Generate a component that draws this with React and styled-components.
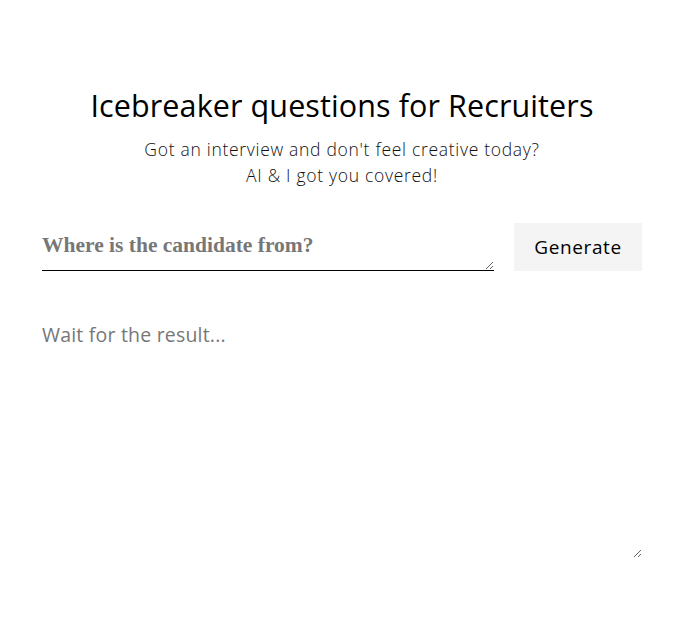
import React from "react";
import styled, { createGlobalStyle } from "styled-components";

const GlobalStyle = createGlobalStyle`
	body {
		margin: 0;
		background: #fff;
		font-family: "Open Sans", "Liberation Sans", sans-serif;
		color: #111;
	}
`;

export default function App() {
	return (
		<>
			<GlobalStyle />
			<Page>
				<Title>Icebreaker questions for Recruiters</Title>
				<Subtitle>
					Got an interview and don't feel creative today?
					<br />
					AI &amp; I got you covered!
				</Subtitle>
				<Form>
					<Location placeholder="Where is the candidate from?" />
					<Button>Generate</Button>
				</Form>
				<Result placeholder="Wait for the result..." autoFocus />
			</Page>
		</>
	);
}

const Page = styled.div`
	width: 600px;
	margin: 0 auto;
	padding-top: 85px;
	display: flex;
	flex-direction: column;
	align-items: center;
`;
const Title = styled.h1`
	margin: 0;
	font-size: 30.5px;
	font-weight: 400;
	line-height: 40px;
	letter-spacing: 0.1px;
	color: #000;
`;
const Subtitle = styled.p`
	margin: 11px 0 0;
	font-size: 17.5px;
	font-weight: 300;
	line-height: 26px;
	letter-spacing: 0.7px;
	text-align: center;
	color: #111;
`;
const Form = styled.div`
	width: 100%;
	margin-top: 35px;
	display: flex;
	align-items: stretch;
	gap: 20px;
`;
const Location = styled.textarea`
	flex: 1;
	height: 48px;
	box-sizing: border-box;
	border: none;
	border-bottom: 1.5px solid #000;
	padding: 10px 0 0;
	font-family: "Liberation Serif", serif;
	font-weight: 700;
	font-size: 21.5px;
	outline: none;
	&::placeholder {
		color: #777;
	}
`;
const Button = styled.button`
	width: 128px;
	height: 48px;
	border: none;
	background: #f4f4f4;
	font-family: "Open Sans", "Liberation Sans", sans-serif;
	font-size: 19px;
	letter-spacing: 0.6px;
	color: #000;
`;
const Result = styled.textarea`
	width: 100%;
	height: 238px;
	margin-top: 49px;
	box-sizing: border-box;
	border: none;
	padding: 0;
	outline: none;
	font-family: "Open Sans", "Liberation Sans", sans-serif;
	font-size: 19.5px;
	line-height: 30px;
	letter-spacing: 0.2px;
	&::placeholder {
		color: #777;
	}
`;
